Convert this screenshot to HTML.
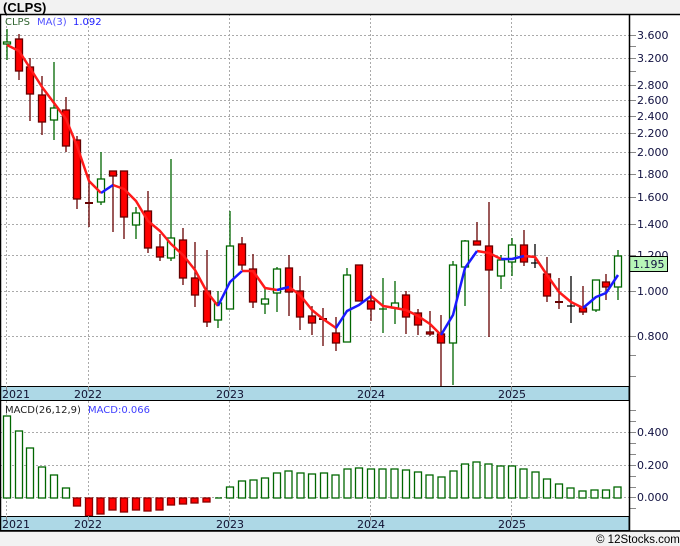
<!DOCTYPE html>
<html><head><meta charset="utf-8"><style>
html,body{margin:0;padding:0;background:#f2f2f2;}
svg{display:block;font-family:"Liberation Sans",sans-serif;}
.dv{font-family:"DejaVu Sans",sans-serif;}
</style></head><body>
<svg width="680" height="546" xmlns="http://www.w3.org/2000/svg">
<rect x="0" y="0" width="680" height="546" fill="#f2f2f2"/>
<text x="3" y="12" font-size="13" font-weight="bold" fill="#000">(CLPS)</text>
<rect x="0" y="14" width="680" height="517" fill="#fff"/>
<g stroke="#aaa" stroke-dasharray="2,2" stroke-width="1">
<path d="M0 35.5H629M0 58.5H629M0 85.5H629M0 100.5H629M0 116.5H629M0 133.5H629M0 152.5H629M0 174.5H629M0 197.5H629M0 224.5H629M0 255.5H629M0 291.5H629M0 336.5H629"/>
<path d="M6.5 14V386M88.5 14V386M229.5 14V386M370.5 14V386M511.5 14V386"/>
<path d="M0 432.5H629M0 465.5H629M0 497.5H629"/>
<path d="M6.5 401V516M88.5 401V516M229.5 401V516M370.5 401V516M511.5 401V516"/>
</g>
<g stroke="#888" stroke-width="1">
<path d="M630 35.5H636M630 46.5H636M630 58.5H636M630 71.5H636M630 85.5H636M630 100.5H636M630 116.5H636M630 133.5H636M630 152.5H636M630 174.5H636M630 197.5H636M630 224.5H636M630 255.5H636M630 291.5H636M630 336.5H636M630 355.5H636M630 376.5H636"/>
<path d="M630 410.5H636M630 421.5H636M630 432.5H636M630 443.5H636M630 454.5H636M630 465.5H636M630 476.5H636M630 487.5H636M630 497.5H636M630 508.5H636"/>
</g>
<g font-size="11" fill="#101040" class="dv">
<text x="637" y="39">3.600</text><text x="637" y="62">3.200</text><text x="637" y="89">2.800</text><text x="637" y="104">2.600</text><text x="637" y="120">2.400</text><text x="637" y="137">2.200</text><text x="637" y="156">2.000</text><text x="637" y="178">1.800</text><text x="637" y="201">1.600</text><text x="637" y="228">1.400</text><text x="637" y="259">1.200</text><text x="637" y="295">1.000</text><text x="637" y="340">0.800</text>
<text x="637" y="436">0.400</text><text x="637" y="469">0.200</text><text x="637" y="501">0.000</text>
</g>
<g stroke-width="1.3">
<g stroke="#006600" fill="#fff">
<path d="M7 29V60M54 62V140M101 152V205M136 207V239M171 159V261M218 291V328M230 211V309M265 288V314M277 267V312M347 268V342M383 278V333M395 281V324M453 261V385M465 240V306M501 255V289M512 238V276M596 280V312M618 250V300" fill="none"/>
<rect x="3.5" y="42" width="7" height="2"/><rect x="50.5" y="108" width="7" height="12"/><rect x="97.5" y="179" width="7" height="23"/><rect x="132.5" y="213" width="7" height="12"/><rect x="167.5" y="238" width="7" height="20"/><rect x="214.5" y="303" width="7" height="17"/><rect x="226.5" y="246" width="7" height="63"/><rect x="261.5" y="299" width="7" height="5"/><rect x="273.5" y="269" width="7" height="24"/><rect x="343.5" y="275" width="7" height="67"/><rect x="391.5" y="303" width="7" height="5"/><rect x="449.5" y="265" width="7" height="78"/><rect x="461.5" y="241" width="7" height="26"/><rect x="497.5" y="260" width="7" height="16"/><rect x="508.5" y="245" width="7" height="17"/><rect x="592.5" y="280" width="7" height="30"/><rect x="614.5" y="256" width="7" height="31"/>
<path d="M379 309H387" fill="none"/>
</g>
<g stroke="#660000" fill="#ff0000">
<path d="M19 34V80M30 58V121M42 76V135M66 97V152M77 136V209M89 174V227M113 171V232M124 171V239M148 191V253M160 234V261M183 228V285M195 242V307M207 250V327M242 237V270M253 254V308M289 255V316M300 276V330M312 306V335M323 308V346M336 317V351M359 265V301M371 291V321M406 291V334M418 309V335M430 311V336M441 315V386M477 222V245M489 202V337M524 230V266M547 257V302M559 278V309M583 286V315M606 274V300" fill="none"/>
<path d="M85 203H93M319 319H327M555 302H563" fill="none" stroke-width="2"/>
<rect x="15.5" y="39" width="7" height="32"/><rect x="26.5" y="67" width="7" height="27"/><rect x="38.5" y="95" width="7" height="27"/><rect x="62.5" y="110" width="7" height="36"/><rect x="73.5" y="140" width="7" height="59"/><rect x="109.5" y="171" width="7" height="5"/><rect x="120.5" y="171" width="7" height="46"/><rect x="144.5" y="211" width="7" height="37"/><rect x="156.5" y="247" width="7" height="10"/><rect x="179.5" y="240" width="7" height="38"/><rect x="191.5" y="278" width="7" height="17"/><rect x="203.5" y="291" width="7" height="31"/><rect x="238.5" y="244" width="7" height="21"/><rect x="249.5" y="269" width="7" height="33"/><rect x="285.5" y="268" width="7" height="24"/><rect x="296.5" y="291" width="7" height="26"/><rect x="308.5" y="316" width="7" height="7"/><rect x="332.5" y="333" width="7" height="10"/><rect x="355.5" y="265" width="7" height="36"/><rect x="367.5" y="301" width="7" height="8"/><rect x="402.5" y="295" width="7" height="22"/><rect x="414.5" y="313" width="7" height="12"/><rect x="426.5" y="332" width="7" height="2"/><rect x="437.5" y="334" width="7" height="9"/><rect x="473.5" y="241" width="7" height="4"/><rect x="485.5" y="246" width="7" height="24"/><rect x="520.5" y="245" width="7" height="17"/><rect x="543.5" y="274" width="7" height="22"/><rect x="579.5" y="308" width="7" height="4"/><rect x="602.5" y="282" width="7" height="5"/>
</g>
<path d="M535 244V268M531 263H539M571 276V323M567 306H575" stroke="#000" fill="none"/>
</g>
<g fill="none" stroke-width="2.5" stroke-linejoin="round">
<path stroke="#ff1a1a" d="M7 45L19 51L30 68L42 87L54 103L66 119L77 146L89 181L101 193M113 185L124 189L136 201L148 221L160 231L171 244L183 255L195 270L207 292L218 306M242 271L253 271L265 288L277 290M289 287L300 295L312 310L323 319L336 328M371 296L383 306L395 308L406 310L418 316L430 324L441 335M477 251L489 253L501 259M524 256L535 257L547 275L559 292L571 302L583 308"/>
<path stroke="#1a1aff" d="M101 193L113 185M218 306L230 282L242 271M277 290L289 287M336 328L347 311L359 305L371 296M441 335L453 315L465 268L477 251M501 259L512 259L524 256M583 308L596 297L606 293L618 275"/>
</g>
<g class="dv" font-size="10">
<text x="5" y="25" fill="#336633">CLPS</text>
<text x="37" y="25" fill="#5050ff">MA(3)</text>
<text x="73" y="25" fill="#2020ff">1.092</text>
</g>
<rect x="629.5" y="256.5" width="38" height="15" fill="#b8f5b8" stroke="#000"/>
<text x="633" y="268" font-size="11" fill="#101040" class="dv">1.195</text>
<g stroke="#006600" stroke-width="1.3" fill="#fff">
<rect x="3.5" y="416" width="7" height="82"/><rect x="15.5" y="431" width="7" height="67"/><rect x="26.5" y="448" width="7" height="50"/><rect x="38.5" y="467" width="7" height="31"/><rect x="50.5" y="475" width="7" height="23"/><rect x="62.5" y="488" width="7" height="10"/>
<path d="M215 498H222" fill="none"/>
<rect x="226.5" y="487" width="7" height="11"/><rect x="238.5" y="481" width="7" height="17"/><rect x="250" y="480" width="7" height="18"/><rect x="261.5" y="478" width="7" height="20"/><rect x="273.5" y="473" width="7" height="25"/><rect x="285" y="471" width="7" height="27"/><rect x="297" y="473" width="7" height="25"/><rect x="308.5" y="474" width="7" height="24"/><rect x="320.5" y="473" width="7" height="25"/><rect x="332" y="475" width="7" height="23"/><rect x="344" y="469" width="7" height="29"/><rect x="355.5" y="468" width="7" height="30"/><rect x="367.5" y="469" width="7" height="29"/><rect x="379" y="469" width="7" height="29"/><rect x="391" y="469" width="7" height="29"/><rect x="402.5" y="470" width="7" height="28"/><rect x="414.5" y="472" width="7" height="26"/><rect x="426" y="475" width="7" height="23"/><rect x="438" y="477" width="7" height="21"/><rect x="450" y="471" width="7" height="27"/><rect x="461.5" y="464" width="7" height="34"/><rect x="473" y="462" width="7" height="36"/><rect x="485" y="464" width="7" height="34"/><rect x="497" y="466" width="7" height="32"/><rect x="508.5" y="466" width="7" height="32"/><rect x="520" y="469" width="7" height="29"/><rect x="532" y="472" width="7" height="26"/><rect x="543.5" y="479" width="7" height="19"/><rect x="555.5" y="484" width="7" height="14"/><rect x="567" y="488" width="7" height="10"/><rect x="579" y="491" width="7" height="7"/><rect x="591" y="490" width="7" height="8"/><rect x="602.5" y="490" width="7" height="8"/><rect x="614" y="487" width="7" height="11"/>
</g>
<g stroke="#880000" stroke-width="1.3" fill="#ff0000">
<rect x="73.5" y="498" width="7" height="8"/><rect x="85.5" y="498" width="7" height="18"/><rect x="97" y="498" width="7" height="16"/><rect x="109" y="498" width="7" height="12"/><rect x="120.5" y="498" width="7" height="14"/><rect x="132.5" y="498" width="7" height="12"/><rect x="144" y="498" width="7" height="13"/><rect x="156" y="498" width="7" height="12"/><rect x="167.5" y="498" width="7" height="7"/><rect x="179.5" y="498" width="7" height="6"/><rect x="191" y="498" width="7" height="5"/><rect x="203" y="498" width="7" height="4"/>
</g>
<g class="dv" font-size="10">
<text x="5" y="413" fill="#222">MACD(26,12,9)</text>
<text x="88" y="413" fill="#4040ff">MACD:0.066</text>
</g>
<rect x="0" y="386.5" width="629" height="14" fill="#add8e6" stroke="#000"/>
<rect x="0" y="516.5" width="629" height="14" fill="#add8e6" stroke="#000"/>
<g stroke="#888"><path d="M6.5 386V391M88.5 386V391M229.5 386V391M370.5 386V391M511.5 386V391M6.5 516V521M88.5 516V521M229.5 516V521M370.5 516V521M511.5 516V521"/></g>
<g font-size="11" fill="#101030" class="dv">
<text x="2" y="398">2021</text><text x="74" y="398">2022</text><text x="216" y="398">2023</text><text x="357" y="398">2024</text><text x="498" y="398">2025</text>
<text x="2" y="528">2021</text><text x="74" y="528">2022</text><text x="216" y="528">2023</text><text x="357" y="528">2024</text><text x="498" y="528">2025</text>
</g>
<path d="M0 14.5H680M629.5 14V531M0.5 14V531" stroke="#000" stroke-width="1.5" fill="none"/>
<rect x="0" y="531.5" width="680" height="15" fill="#f2f2f2"/>
<path d="M0 531H680" stroke="#000" stroke-width="1.5"/>
<text x="596" y="543" font-size="11.5" fill="#000">© 12Stocks.com</text>
</svg>
</body></html>
